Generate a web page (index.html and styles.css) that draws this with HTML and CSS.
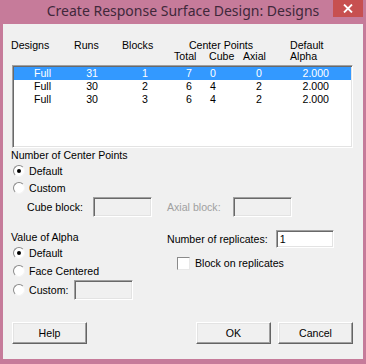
FILE: index.html
```html
<!DOCTYPE html>
<html lang="en">
<head>
  <meta charset="UTF-8" />
  <title>Create Response Surface Design: Designs</title>
  <link rel="stylesheet" href="styles.css">
</head>
<body>
  <div class="window">
    <div class="titlebar">
      <span class="title">Create Response Surface Design: Designs</span>
      <span class="close">
        <svg width="10" height="9" viewBox="0 0 10 9"><path d="M1 0.5 L9 8.5 M9 0.5 L1 8.5" stroke="#fff" stroke-width="1.8" fill="none"/></svg>
      </span>
    </div>

    <div class="client">
      <div class="list-head">
        <span class="h-designs">Designs</span>
        <span class="h-runs">Runs</span>
        <span class="h-blocks">Blocks</span>
        <span class="h-center">Center Points</span>
        <span class="h-total">Total</span>
        <span class="h-cube">Cube</span>
        <span class="h-axial">Axial</span>
        <span class="h-default">Default</span>
        <span class="h-alpha">Alpha</span>
      </div>

      <div class="listbox">
        <div class="list-row selected">
          <span class="c-design">Full</span><span class="c-num">31</span><span class="c-blocks">1</span><span class="c-total">7</span><span class="c-cube">0</span><span class="c-axial">0</span><span class="c-alpha">2.000</span>
        </div>
        <div class="list-row">
          <span class="c-design">Full</span><span class="c-num">30</span><span class="c-blocks">2</span><span class="c-total">6</span><span class="c-cube">4</span><span class="c-axial">2</span><span class="c-alpha">2.000</span>
        </div>
        <div class="list-row">
          <span class="c-design">Full</span><span class="c-num">30</span><span class="c-blocks">3</span><span class="c-total">6</span><span class="c-cube">4</span><span class="c-axial">2</span><span class="c-alpha">2.000</span>
        </div>
      </div>

      <div class="center-points">
        <div class="group-title">Number of Center Points</div>
        <div class="radio-row"><span class="radio checked"></span>Default</div>
        <div class="radio-row"><span class="radio"></span>Custom</div>
        <div class="block-row">
          <span class="block-label">Cube block:</span>
          <span class="textbox disabled"></span>
          <span class="block-label muted">Axial block:</span>
          <span class="textbox disabled"></span>
        </div>
      </div>

      <div class="lower">
        <div class="alpha">
          <div class="group-title">Value of Alpha</div>
          <div class="radio-row tall"><span class="radio checked"></span>Default</div>
          <div class="radio-row tall"><span class="radio"></span>Face Centered</div>
          <div class="radio-row custom"><span class="radio"></span>Custom:<span class="textbox disabled small"></span></div>
        </div>
        <div class="replicates">
          <div class="rep-row">
            <span>Number of replicates:</span>
            <span class="textbox rep-input">1</span>
          </div>
          <div class="check-row"><span class="checkbox"></span>Block on replicates</div>
        </div>
      </div>

      <div class="buttons">
        <button class="btn">Help</button>
        <button class="btn btn-ok">OK</button>
        <button class="btn">Cancel</button>
      </div>
    </div>
  </div>
</body>
</html>
```

FILE: styles.css
```css
body {
  margin: 0;
  font-family: 'Liberation Sans', Arial, sans-serif;
  font-size: 10.6px;
  color: #000;
}

.window {
  width: 366px;
  height: 364px;
  background: #c67b9a;
  box-sizing: border-box;
  padding: 0 3px 5px 3px;
}

.titlebar {
  position: relative;
  height: 24px;
  display: flex;
  justify-content: center;
  align-items: center;
}

.title {
  font-family: 'Noto Sans', sans-serif;
  font-size: 14px;
  color: #40283a;
  margin-top: -3px;
}

.close {
  position: absolute;
  top: 0;
  right: 0;
  width: 30px;
  height: 17px;
  background: #c75050;
  display: flex;
  align-items: center;
  justify-content: center;
}

.client {
  height: 335px;
  background: #f0f0f0;
  box-sizing: border-box;
  padding: 16px 10px 0 8px;
}

.list-head {
  display: grid;
  grid-template-columns: 63px 48px 52px 35px 34px 25px 22px auto;
  grid-template-rows: 11px 11px;
  line-height: 11px;
}

.h-designs { grid-row: 1; grid-column: 1; }
.h-runs    { grid-row: 1; grid-column: 2; }
.h-blocks  { grid-row: 1; grid-column: 3; }
.h-center  { grid-row: 1; grid-column: 4 / 7; text-align: center; }
.h-total   { grid-row: 2; grid-column: 4; }
.h-cube    { grid-row: 2; grid-column: 5; }
.h-axial   { grid-row: 2; grid-column: 6; }
.h-default { grid-row: 1; grid-column: 8; }
.h-alpha   { grid-row: 2; grid-column: 8; }

.listbox {
  margin: 3px 0 0 1px;
  width: 341px;
  height: 83px;
  box-sizing: border-box;
  background: #fff;
  border: 1px solid;
  border-color: #a0a0a0 #fff #fff #a0a0a0;
  box-shadow: inset 1px 1px #696969, inset -1px -1px #e3e3e3;
  padding: 1px;
}

.list-row {
  display: grid;
  grid-template-columns: 46px 38px 50px 44px 30px 40px 67px;
  height: 13px;
  line-height: 13px;
}

.list-row.selected {
  background: #3399ff;
  color: #fff;
}

.c-design { padding-left: 20px; }
.c-num, .c-blocks, .c-total, .c-axial, .c-alpha { text-align: right; }
.c-cube { padding-left: 18px; }

.group-title {
  line-height: 13px;
  margin-top: 1px;
}

.radio-row {
  display: flex;
  align-items: center;
  height: 17px;
  padding-left: 2px;
}

.radio-row.tall {
  height: 18px;
}

.radio-row.custom {
  height: 20px;
}

.radio {
  width: 12px;
  height: 12px;
  box-sizing: border-box;
  border-radius: 50%;
  border: 1px solid;
  border-color: #8a8a8a #f4f4f4 #f4f4f4 #8a8a8a;
  background: #fff;
  margin-right: 4px;
  display: flex;
  align-items: center;
  justify-content: center;
}

.radio.checked::after {
  content: "";
  width: 4px;
  height: 4px;
  border-radius: 50%;
  background: #000;
}

.block-row {
  display: flex;
  align-items: center;
  height: 20px;
  margin-top: 1px;
  padding-left: 16px;
}

.block-label {
  width: 66px;
}

.block-label.muted {
  color: #a0a0a0;
}

.textbox {
  display: inline-block;
  width: 59px;
  height: 20px;
  box-sizing: border-box;
  background: #fff;
  border: 1px solid;
  border-color: #a0a0a0 #fff #fff #a0a0a0;
  box-shadow: inset 1px 1px #696969, inset -1px -1px #e3e3e3;
}

.textbox.disabled {
  background: #f0f0f0;
}

.block-row .textbox:nth-child(2) {
  margin-right: 15px;
}

.textbox.small {
  margin-left: 6px;
}

.lower {
  display: flex;
  margin-top: 13px;
  height: 70px;
}

.alpha {
  width: 155px;
}

.replicates {
  flex: 1;
}

.rep-row {
  display: flex;
  align-items: center;
  height: 18px;
  padding-left: 1px;
}

.rep-input {
  width: 58px;
  height: 18px;
  margin-left: 8px;
  padding-left: 3px;
  line-height: 16px;
}

.check-row {
  display: flex;
  align-items: center;
  height: 16px;
  margin-top: 7px;
  padding-left: 11px;
}

.checkbox {
  width: 13px;
  height: 13px;
  box-sizing: border-box;
  background: #fff;
  border: 1px solid;
  border-color: #8a8a8a #e8e8e8 #e8e8e8 #8a8a8a;
  margin-right: 5px;
}

.buttons {
  display: flex;
  gap: 7px;
  margin-top: 22px;
  padding-left: 1px;
}

.btn {
  width: 75px;
  height: 22px;
  font-family: inherit;
  font-size: inherit;
  color: #000;
  background: #f0f0f0;
  border: 1px solid;
  border-color: #fff #646464 #646464 #fff;
  box-shadow: inset -1px -1px #a0a0a0, inset 1px 1px #e3e3e3;
  padding: 0;
}

.btn-ok {
  margin-left: auto;
}
```
